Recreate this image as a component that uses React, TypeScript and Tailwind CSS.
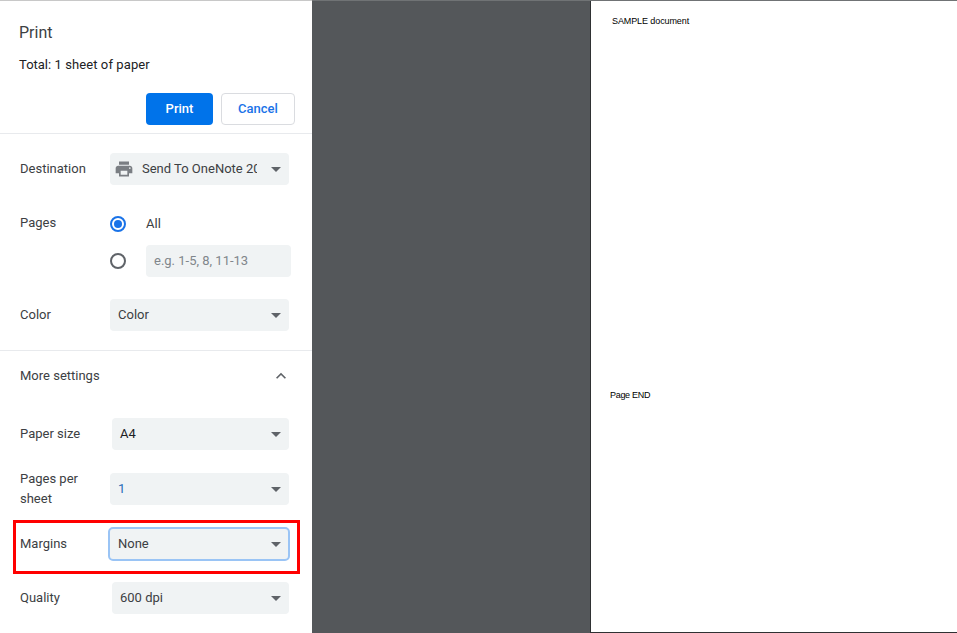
import React from "react";

function Caret({ cls = "mr-[8px]" }: { cls?: string }) {
  return <span className={"ml-auto h-0 w-0 shrink-0 border-x-[5px] border-t-[5px] border-x-transparent border-t-[#5f6368] " + cls} />;
}

function Select({ text, cls = "", textCls = "text-[#202124]", caretCls }: { text: string; cls?: string; textCls?: string; caretCls?: string }) {
  return (
    <div className={"flex h-[32px] items-center rounded-[4px] bg-[#f0f3f4] pl-[8px] " + cls}>
      <span className={"text-[13px] " + textCls}>{text}</span>
      <Caret cls={caretCls} />
    </div>
  );
}

function Label({ children, cls = "" }: { children: React.ReactNode; cls?: string }) {
  return <div className={"text-[13px] text-[#3c4043] " + cls}>{children}</div>;
}

export default function App() {
  return (
    <div className="relative flex h-[633px] w-[957px] overflow-hidden bg-[#54575a] font-['Roboto',sans-serif]">
      <div className="flex w-[312px] shrink-0 flex-col border-t border-[#c8c8c8] bg-white">
        <div className="h-[133px] border-b border-[#e8eaed] pl-[19px] pr-[17px]">
          <div className="mt-[22px] h-[20px] text-[16px] leading-[20px] text-[#3c4043]">Print</div>
          <div className="mt-[13px] h-[18px] text-[13px] leading-[18px] text-[#202124]">
            Total: <span className="tracking-[0.1px]">1 sheet of paper</span>
          </div>
          <div className="mt-[19px] flex justify-end gap-[8px]">
            <div className="flex h-[32px] w-[67px] items-center justify-center rounded-[4px] bg-[#0073ea] text-[13px] font-medium text-white">Print</div>
            <div className="flex h-[32px] w-[74px] items-center justify-center rounded-[4px] border border-[#dadce0] text-[13px] font-medium text-[#1a73e8]">Cancel</div>
          </div>
        </div>

        <div className="flex h-[217px] flex-col border-b border-[#e8eaed] pl-[20px]">
          <div className="mt-[19px] flex items-center">
            <Label cls="w-[90px]">Destination</Label>
            <div className="flex h-[32px] w-[179px] items-center rounded-[4px] bg-[#f0f3f4] pl-[4px]">
              <svg width="20" height="20" viewBox="0 0 24 24" fill="#7a7e83" className="shrink-0">
                <path d="M19 8H5c-1.66 0-3 1.34-3 3v6h4v4h12v-4h4v-6c0-1.66-1.34-3-3-3zm-3 11H8v-5h8v5zm3-7c-.55 0-1-.45-1-1s.45-1 1-1 1 .45 1 1-.45 1-1 1zm-1-9H6v4h12V3z" />
              </svg>
              <span className="ml-[8px] w-[115px] overflow-hidden whitespace-nowrap text-[13px] text-[#3c4043]">Send To OneNote 2016</span>
              <Caret />
            </div>
          </div>

          <div className="mt-[29px] flex h-[20px] items-center">
            <Label cls="w-[90px] -translate-y-[1px]">Pages</Label>
            <span className="flex h-[16px] w-[16px] items-center justify-center rounded-full border-2 border-[#1a73e8]">
              <span className="h-[8px] w-[8px] rounded-full bg-[#1a73e8]" />
            </span>
            <span className="ml-[20px] text-[13px] text-[#3c4043]">All</span>
          </div>
          <div className="mt-[11px] flex h-[32px] items-center pl-[90px]">
            <span className="h-[16px] w-[16px] rounded-full border-2 border-[#5f6368]" />
            <div className="ml-[20px] flex h-[32px] w-[145px] items-center rounded-[4px] bg-[#f0f3f4] pl-[8px] text-[13px] text-[#80868b]">e.g. 1-5, 8, 11-13</div>
          </div>

          <div className="mt-[22px] flex items-center">
            <Label cls="w-[90px]">Color</Label>
            <Select text="Color" cls="w-[179px]" textCls="text-[#3c4043]" />
          </div>
        </div>

        <div className="flex h-[50px] items-center pl-[20px] pr-[21px]">
          <Label>More settings</Label>
          <svg width="20" height="20" viewBox="0 0 24 24" fill="#5f6368" className="ml-auto">
            <path d="M12 8l-6 6 1.41 1.41L12 10.83l4.59 4.58L18 14z" />
          </svg>
        </div>

        <div className="flex flex-col pl-[20px]">
          <div className="mt-[17px] flex items-center">
            <Label cls="w-[92px]">Paper size</Label>
            <Select text="A4" cls="w-[177px]" />
          </div>
          <div className="mt-[19px] flex items-center">
            <Label cls="w-[90px] leading-[20px]">Pages per<br />sheet</Label>
            <Select text="1" cls="w-[179px]" textCls="text-[#2a6cb8]" />
          </div>
          <div className="mt-[18px] flex items-center">
            <Label cls="w-[88px]">Margins</Label>
            <Select text="None" cls="h-[34px] w-[182px] rounded-[5px] border-2 border-[#9ac4f5]" textCls="text-[#3c4043]" caretCls="mr-[7px]" />
          </div>
          <div className="mt-[21px] flex items-center">
            <Label cls="w-[92px]">Quality</Label>
            <Select text="600 dpi" cls="w-[177px]" textCls="text-[#3c4043]" />
          </div>
        </div>
      </div>

      <div className="flex flex-1 justify-end border-t border-[#707375]">
        <div className="w-[367px] border-b border-l border-[#2f3133] bg-white pt-[15px] font-['Liberation_Sans',sans-serif] text-[9px] leading-[10px] text-black">
          <div className="pl-[21px] tracking-[-0.1px]">SAMPLE document</div>
          <div className="mt-[364px] pl-[19px] tracking-[-0.3px]">Page END</div>
        </div>
      </div>

      <div className="pointer-events-none absolute left-[13px] top-[520px] h-[54px] w-[287px] border-[3px] border-[#ff0000]" />
    </div>
  );
}
